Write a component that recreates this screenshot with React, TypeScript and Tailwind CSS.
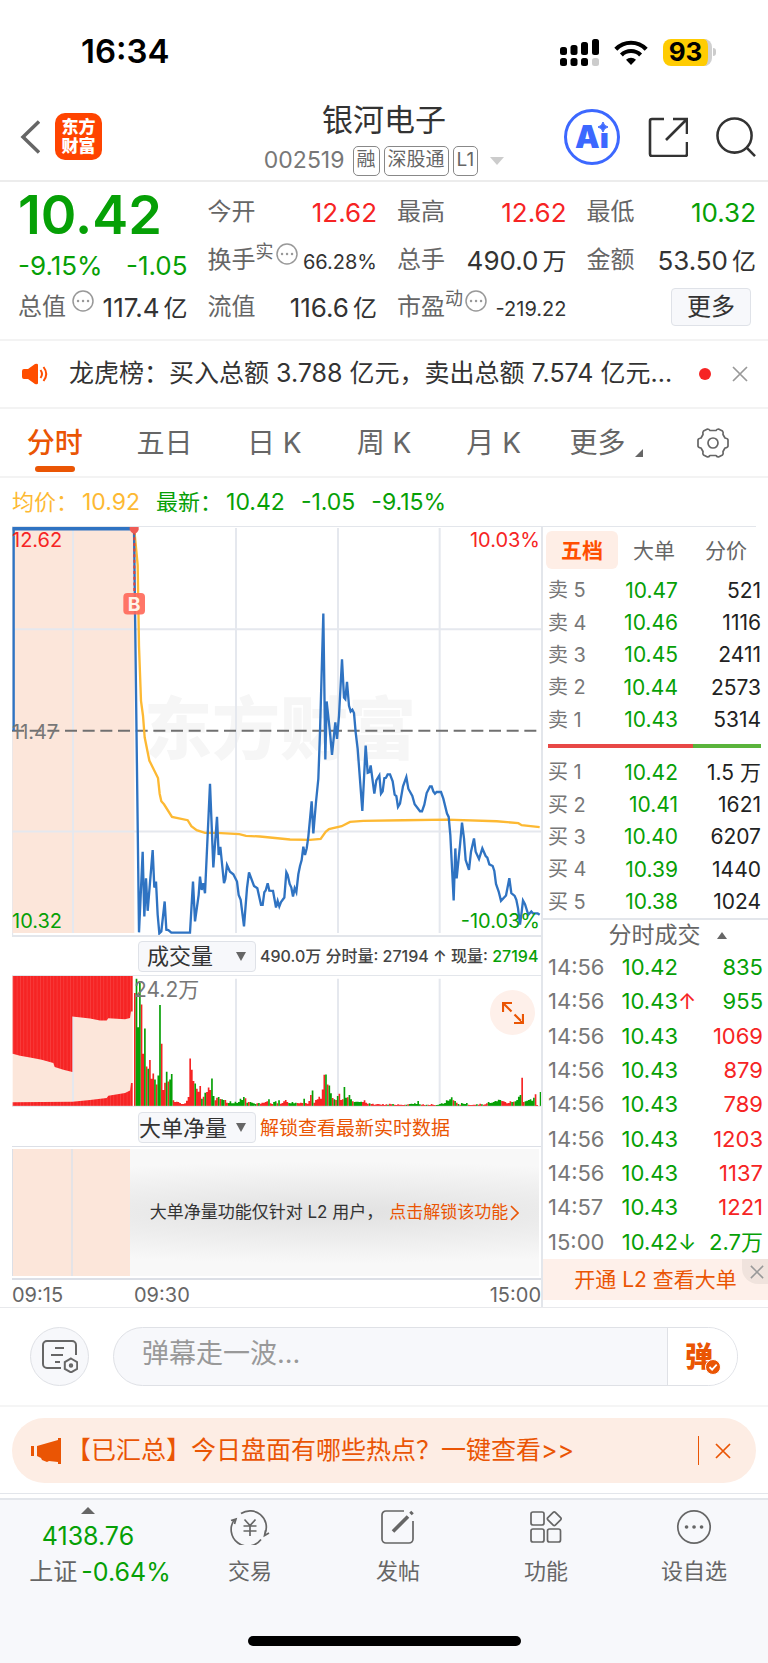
import { useState, type ReactNode } from 'react';
import clsx from 'clsx';

const UP = '#f62424';
const DOWN = '#06a006';

type Level = { label: string; price: string; volume: string };

const asks: Level[] = [
  { label: '卖 5', price: '10.47', volume: '521' },
  { label: '卖 4', price: '10.46', volume: '1116' },
  { label: '卖 3', price: '10.45', volume: '2411' },
  { label: '卖 2', price: '10.44', volume: '2573' },
  { label: '卖 1', price: '10.43', volume: '5314' },
];

const bids: Level[] = [
  { label: '买 1', price: '10.42', volume: '1.5 万' },
  { label: '买 2', price: '10.41', volume: '1621' },
  { label: '买 3', price: '10.40', volume: '6207' },
  { label: '买 4', price: '10.39', volume: '1440' },
  { label: '买 5', price: '10.38', volume: '1024' },
];

const trades = [
  { time: '14:56', price: '10.42', dir: '', volume: '835', buy: false },
  { time: '14:56', price: '10.43', dir: '↑', volume: '955', buy: false },
  { time: '14:56', price: '10.43', dir: '', volume: '1069', buy: true },
  { time: '14:56', price: '10.43', dir: '', volume: '879', buy: true },
  { time: '14:56', price: '10.43', dir: '', volume: '789', buy: true },
  { time: '14:56', price: '10.43', dir: '', volume: '1203', buy: true },
  { time: '14:56', price: '10.43', dir: '', volume: '1137', buy: true },
  { time: '14:57', price: '10.43', dir: '', volume: '1221', buy: true },
  { time: '15:00', price: '10.42', dir: '↓', volume: '2.7万', buy: false },
];

const periods = ['分时', '五日', '日 K', '周 K', '月 K', '更多'];

const pricePoints =
  '41,635 41,25 402,25 417,1243 428,1000 433,1195 438,1080 443,1178 458,995 463,1108 468,1090 473,1190 478,1246 484,1240 494,1150 499,1235 505,1236 514,1244 570,1244 579,1090 585,1210 596,1130 600,1075 605,1115 610,1095 615,1125 630,795 640,1047 651,895 656,1010 661,985 672,1095 676,1082 681,1040 690,1060 700,1068 711,1090 716,1130 722,1145 732,1225 741,1110 747,1062 762,1103 772,1110 783,1160 788,1160 793,1122 797,1117 803,1095 808,1117 819,1118 828,1168 833,1148 838,1165 843,1152 853,1138 859,1062 863,1070 869,1097 874,1108 879,1135 884,1110 889,1122 895,1068 900,1043 905,1025 910,985 915,1010 920,990 925,955 935,848 940,945 948,850 955,780 960,640 970,282 976,722 980,547 990,640 996,708 1006,610 1011,660 1017,590 1026,420 1032,535 1036,540 1041,488 1047,560 1052,577 1057,572 1062,582 1067,640 1073,690 1087,877 1097,680 1103,762 1108,760 1112,740 1123,825 1129,785 1138,770 1143,825 1148,818 1153,778 1158,777 1163,767 1170,767 1178,788 1184,828 1189,832 1194,865 1200,855 1209,803 1219,775 1225,810 1237,832 1244,857 1260,878 1266,878 1273,858 1280,823 1290,803 1295,803 1300,818 1305,825 1310,820 1323,820 1330,840 1341,885 1346,895 1351,950 1361,1147 1366,990 1370,1080 1380,980 1386,912 1392,960 1397,1025 1407,1055 1413,1000 1422,960 1427,1000 1437,1022 1447,990 1457,1013 1462,1018 1468,1038 1478,1043 1483,1058 1488,1097 1496,1120 1503,1148 1518,1132 1528,1080 1534,1125 1544,1133 1549,1145 1554,1170 1560,1220 1564,1190 1569,1147 1575,1158 1585,1190 1594,1180 1599,1186 1613,1186 1619,1190';

const averagePoints =
  '403,30 413,135 417,380 423,545 429,590 434,655 448,725 474,778 479,825 484,848 492,857 516,895 563,905 574,923 590,935 615,943 650,943 718,947 738,952 780,954 840,960 870,963 930,964 962,961 977,940 987,932 1025,923 1050,910 1090,907 1210,905 1340,903 1490,908 1555,914 1565,920 1619,926';

// one bar per minute, negative = sell side (green)
const minuteVolumes = [
  340, -383, -237, -370, 305, 157, -233, 119, -112, 138, 82, 98, -80, 65, -92, -304, 187, 48, 70, -103,
  74, -80, -96, 17, 12, 13, 12, 9, 6, 6, 8, 16, 27, 143, 109, 75, -68, 52, 43, 60,
  -22, 28, -40, 42, 56, 48, -83, -30, 17, 25, -27, 21, -20, -18, 18, 10, -9, -14, -8, -8,
  -13, -9, -12, -22, -18, -27, 23, -10, 12, -12, -10, -8, -6, 8, -9, 7, 10, 10, 12, 14,
  -20, 8, 6, -12, -14, 8, -17, 7, 9, 14, 18, 12, -9, -8, -12, -8, -10, 9, 8, 10,
  9, -22, 9, 7, 15, 33, -47, 10, 18, 20, 28, 22, 50, 94, -95, 65, -62, -38, 24, -20,
  18, -30, 37, 18, 20, -57, -25, 26, -33, -20, 14, -12, -13, -13, -12, -13, 12, 17, 10, 7,
  -8, 6, 7, 4, 5, 6, 5, 4, 6, 3, 5, -4, 7, 5, -6, 4, 3, 5, 4, 4,
  3, 4, -4, 5, -6, -7, -6, -8, -6, -15, -5, 4, 5, 3, -4, 4, 3, 6, 4, 3,
  -3, -4, -6, -8, -7, -9, -17, -16, -20, -26, 17, -15, 10, -6, 4, -9, -7, -6, -9, 4,
  3, 3, 4, 4, -5, 4, 7, -5, 4, 5, 8, -12, -9, -10, -12, -15, -14, -19, -18, 15,
  14, 12, 8, 9, 14, -12, 13, -14, -18, -28, -33, 85, 12, -14, -16, -18, -20, -16, -25, 35,
  3, 0, -42,
];

const BAR_STEP = 5.03;

function barsPath(sign: 1 | -1) {
  return minuteVolumes
    .map((v, i) => (v * sign > 0 ? `M${402 + i * BAR_STEP} 527v${-Math.abs(v)}h5v${Math.abs(v)}z` : ''))
    .join('');
}

function MoreDots() {
  return (
    <svg viewBox="0 0 22 22" className="size-[22px] shrink-0" fill="none" stroke="#999" strokeWidth="1.5">
      <circle cx="11" cy="11" r="10" />
      <path d="M6 11h.1M11 11h.1M16 11h.1" strokeWidth="2.4" strokeLinecap="round" />
    </svg>
  );
}

function CloseIcon({ className }: { className?: string }) {
  return (
    <svg viewBox="0 0 16 16" className={className} fill="none" stroke="currentColor" strokeWidth="1.7">
      <path d="M1 1l14 14M15 1L1 15" />
    </svg>
  );
}

function StatusBar() {
  return (
    <div className="flex h-24 items-center justify-between pt-2 pr-[52px] pl-[81px]">
      <span className="text-[33px] font-semibold text-black">16:34</span>
      <div className="flex items-center gap-[15px]">
        <svg viewBox="0 0 39 28" className="h-7 w-[39px]">
          <g fill="#000">
            <rect x="0" y="9" width="7" height="8" rx="2.5" />
            <rect x="10.5" y="7" width="7" height="10" rx="2.5" />
            <rect x="21" y="4" width="7" height="13" rx="2.5" />
            <rect x="32" y="1" width="7" height="16" rx="2.5" />
            <rect x="0" y="20" width="7" height="8" rx="2.5" />
            <rect x="10.5" y="20" width="7" height="8" rx="2.5" />
            <rect x="21" y="20" width="7" height="8" rx="2.5" />
          </g>
          <rect x="32" y="20" width="7" height="8" rx="2.5" fill="#ccc" />
        </svg>
        <svg viewBox="0 0 34 25" className="h-[25px] w-[34px]" fill="none" stroke="#000" strokeWidth="4.2">
          <path d="M1.8 9.2C10.2.6 23.8.6 32.2 9.2" />
          <path d="M7.4 14.9c5.3-5.2 13.9-5.2 19.2 0" />
          <path d="M17 25l-5-5.3c2.9-2.7 7.1-2.7 10 0z" fill="#000" stroke="none" />
        </svg>
        <div className="flex items-center gap-px">
          <div className="flex h-[27px] w-[49px] items-center justify-center rounded-lg border-r-4 border-[#d0d0d0] bg-[#ffcc02] text-[26px] leading-none font-bold text-black">
            93
          </div>
          <div className="h-2 w-[3px] rounded-r bg-[#ccc]" />
        </div>
      </div>
    </div>
  );
}

function Tag({ children }: { children: ReactNode }) {
  return (
    <span className="flex h-[30px] items-center rounded-[5px] border border-[#888] px-[3px] text-[19px] text-[#666]">
      {children}
    </span>
  );
}

function Header() {
  return (
    <header className="grid h-[86px] grid-cols-[1fr_auto_1fr] items-center border-b-2 border-[#ececec] px-3 pb-[3px]">
      <div className="flex items-center gap-[15px] pl-2">
        <button aria-label="返回">
          <svg viewBox="0 0 20 34" className="h-[34px] w-5" fill="none" stroke="#666" strokeWidth="3.5">
            <path d="M19 1.5L3 17l16 15.5" />
          </svg>
        </button>
        <div className="flex size-[47px] flex-col items-center justify-center rounded-[10px] bg-[#ff4400] text-[17px] leading-[19px] font-black text-white">
          <span>东方</span>
          <span>财富</span>
        </div>
      </div>
      <div className="flex flex-col items-center gap-2 pt-1">
        <h1 className="text-[31px] leading-9 text-[#333]">银河电子</h1>
        <div className="flex items-center gap-1">
          <span className="mr-1 text-[23px] leading-none text-[#777]">002519</span>
          <Tag>融</Tag>
          <Tag>深股通</Tag>
          <Tag>L1</Tag>
          <svg viewBox="0 0 14 8" className="ml-2 h-2 w-3.5" fill="#ccc">
            <path d="M0 0h14L7 8z" />
          </svg>
        </div>
      </div>
      <div className="flex items-center justify-end gap-7">
        <button
          aria-label="AI 助手"
          className="relative flex size-14 items-center justify-center rounded-full border-[3px] border-[#3c68ff] text-[31px] leading-none font-black text-[#3c68ff]"
        >
          Ai
          <svg viewBox="0 0 12 12" className="absolute top-[9px] right-2 size-3">
            <rect width="12" height="12" fill="#fff" />
            <path d="M6 1q.8 4.2 5 5-4.2.8-5 5-.8-4.2-5-5 4.2-.8 5-5z" fill="#3c68ff" stroke="#3c68ff" />
          </svg>
        </button>
        <button aria-label="分享">
          <svg viewBox="0 0 40 40" className="size-10" fill="none" stroke="#333" strokeWidth="2.6">
            <path d="M16 2H4a2 2 0 0 0-2 2v33a2 2 0 0 0 2 2h33a2 2 0 0 0 2-2V25" />
            <path d="M25 2h14v15M39 2L18 23" />
          </svg>
        </button>
        <button aria-label="搜索">
          <svg viewBox="0 0 41 41" className="size-10" fill="none" stroke="#333" strokeWidth="2.6">
            <circle cx="19" cy="19" r="17.5" />
            <path d="M31 31l9 9" />
          </svg>
        </button>
      </div>
    </header>
  );
}

function Stat({ label, note, children }: { label: string; note?: string; children: ReactNode }) {
  return (
    <div className="flex items-center justify-between text-[26px] whitespace-nowrap">
      <div className="flex items-center text-2xl text-[#666]">
        {label}
        {note !== undefined && (
          <>
            <span className="mb-4 min-w-1 text-lg leading-5">{note}</span>
            <span className="mb-3 ml-0.5">
              <MoreDots />
            </span>
          </>
        )}
      </div>
      {children}
    </div>
  );
}

function Amount({ value, unit }: { value: string; unit: string }) {
  return (
    <span>
      {value}
      <span className="ml-1 text-2xl">{unit}</span>
    </span>
  );
}

function Quote() {
  return (
    <section className="grid grid-cols-4 grid-rows-[48px_48px_46px] gap-x-5 border-b-2 border-[#f3f3f3] pt-1.5 pr-3 pb-[9px] pl-[18px] text-[#333]">
      <div className="flex items-center pt-1.5 text-[54px] leading-none font-semibold text-[#06a006]">10.42</div>
      <Stat label="今开"><span className="text-[#f62424]">12.62</span></Stat>
      <Stat label="最高"><span className="text-[#f62424]">12.62</span></Stat>
      <Stat label="最低"><span className="text-[#06a006]">10.32</span></Stat>
      <div className="flex items-center justify-between pt-2.5 text-[26px] text-[#06a006]">
        <span>-9.15%</span>
        <span>-1.05</span>
      </div>
      <Stat label="换手" note="实"><span className="pt-1 text-xl">66.28%</span></Stat>
      <Stat label="总手"><Amount value="490.0" unit="万" /></Stat>
      <Stat label="金额"><Amount value="53.50" unit="亿" /></Stat>
      <Stat label="总值" note=""><Amount value="117.4" unit="亿" /></Stat>
      <Stat label="流值"><Amount value="116.6" unit="亿" /></Stat>
      <Stat label="市盈" note="动"><span className="pt-1 text-xl">-219.22</span></Stat>
      <div className="flex items-center justify-end pr-[5px]">
        <button className="h-[38px] w-20 rounded border border-[#dfe2e8] bg-[#f7f8fb] text-2xl leading-none">
          更多
        </button>
      </div>
    </section>
  );
}

function NewsBar() {
  return (
    <section className="flex h-[68px] items-center border-b-2 border-[#f3f3f3] pr-5 pl-[22px]">
      <svg viewBox="0 0 26 22" className="h-[22px] w-[26px] shrink-0">
        <path d="M0 8q0-2 2-2h4l7-5q3-1 3 1v18q0 2-3 1l-7-5H2q-2 0-2-2z" fill="#ff4e00" />
        <path d="M18.5 7q3 4 0 8M21.5 4q5.5 7 0 14" fill="none" stroke="#ff4e00" strokeWidth="2" />
      </svg>
      <a href="#news" className="ml-[21px] flex-1 truncate text-[25px] text-[#333]">
        龙虎榜：买入总额 3.788 亿元，卖出总额 7.574 亿元...
      </a>
      <span className="ml-3 size-3 rounded-full bg-[#f62424]" />
      <button aria-label="关闭" className="ml-[21px] text-[#999]">
        <CloseIcon className="size-4" />
      </button>
    </section>
  );
}

function PeriodTabs() {
  const [active, setActive] = useState('分时');
  return (
    <nav className="grid h-[69px] grid-cols-7 border-b-2 border-[#f3f3f3] text-[28px]">
      {periods.map((p) => (
        <button
          key={p}
          onClick={() => setActive(p)}
          className={clsx(
            'relative flex items-center justify-center',
            active === p ? 'font-medium text-[#ea5504]' : 'text-[#666]',
            p === '更多' && 'pl-1.5',
          )}
        >
          {p}
          {p === '更多' && (
            <svg viewBox="0 0 8 8" className="mt-5 ml-2.5 size-2" fill="#666">
              <path d="M8 0v8H0z" />
            </svg>
          )}
          {active === p && <span className="absolute bottom-1 h-1.5 w-10 rounded-full bg-[#ea5504]" />}
        </button>
      ))}
      <button aria-label="设置" className="flex items-center justify-center">
        <svg viewBox="0 0 32 30" className="h-[30px] w-8" fill="none" stroke="#666" strokeWidth="1.7" strokeLinejoin="round">
          <path d="M10.5 1q1.5 0 2.5 1.5h6Q20 1 21.5 1l4 2q1 1 .5 3.5l2 3.5q3 .5 3 2v6q0 1.5-3 2l-2 3.500q.5 2.500-.5 3.500l-4 2q-1.500 0-2.500-1.500h-6Q12 29 10.500 29l-4-2q-1-1-.5-3.500L4 20q-3-.5-3-2v-6q0-1.500 3-2l2-3.500Q5.500 4 6.500 3z" />
          <circle cx="16" cy="15" r="5" />
        </svg>
      </button>
    </nav>
  );
}

function PriceLegend() {
  return (
    <div className="flex h-12 items-center gap-4 pl-3 text-[23px] text-[#06a006]">
      <span className="flex items-center gap-1 text-[#fdb933]">
        <span className="text-[22px]">均价：</span>10.92
      </span>
      <span className="flex items-center gap-1">
        <span className="text-[22px]">最新：</span>10.42
      </span>
      <span>-1.05</span>
      <span>-9.15%</span>
    </div>
  );
}

function PriceChart() {
  return (
    <div className="relative h-[411px] border-t border-b-2 border-[#e3e6eb] text-xl leading-none">
      <span className="absolute top-[168px] left-[132px] text-[68px] font-black text-[#f6f6f6]">东方财富</span>
      <svg viewBox="36 21 1587 1230" preserveAspectRatio="none" className="absolute inset-0 size-full" fill="none">
        <path d="M38 21V1251" stroke="#dfe3ea" strokeWidth="3" />
        <path d="M43 30H403V1245H38V635H43z" fill="#fce6da" />
        <path d="M219 30V1245M708 24V1245M1014 24V1245M1319 24V1245M38 329H1623M38 939H1623" stroke="#e5e8ee" strokeWidth="6" />
        <path d="M36 635H1619" stroke="#707070" strokeWidth="6" strokeDasharray="36 17" />
        <polyline points={averagePoints} stroke="#fdb933" strokeWidth="7" />
        <polyline points={pricePoints} stroke="#2f73c2" strokeWidth="7" />
        <path d="M38 26H390" stroke="#2f73c2" strokeWidth="11" />
        <path d="M403 35V220" stroke="#e0433c" strokeWidth="6" strokeDasharray="9 8" />
        <path d="M389 21h27v8q-4 11-13 11t-14-11z" fill="#ee5b55" />
        <rect x="370" y="220" width="65" height="65" rx="12" fill="#ff6a5b" fillOpacity=".92" />
        <text x="402.5" y="273" textAnchor="middle" fontSize="58" fontWeight="700" fill="#fff4e8">B</text>
      </svg>
      <span className="absolute top-[3px] left-0 text-[#f62424]">12.62</span>
      <span className="absolute top-[3px] right-px text-[#f62424]">10.03%</span>
      <span className="absolute top-[195px] left-0 text-[#777]">11.47</span>
      <span className="absolute bottom-1 left-0 text-[#06a006]">10.32</span>
      <span className="absolute right-px bottom-1 text-[#06a006]">-10.03%</span>
    </div>
  );
}

function VolumeChart() {
  return (
    <div className="relative h-[132px] border-t border-[#e3e6eb]">
      <svg viewBox="36 136 1587 394" preserveAspectRatio="none" className="absolute inset-0 size-full">
        <defs>
          <pattern id="bars" width="10" height="10" patternUnits="userSpaceOnUse">
            <rect width="10" height="10" fill={UP} />
            <rect width="2" height="10" fill="#fff" fillOpacity=".14" />
          </pattern>
        </defs>
        <rect x="38" y="136" width="360" height="391" fill="#fce6da" />
        <path d="M219 144V527M708 144V527M1014 144V527M1319 144V527" stroke="#e5e8ee" strokeWidth="6" />
        <path d="M38 136V370L60 376 90 381 125 388 160 398 164 410 190 418 217 425V258L270 264 300 270H320L325 263 375 266 390 262 393 243H398V136z" fill="url(#bars)" />
        <path d="M38 527V516L217 514 270 509 320 503 325 496 375 488 390 480 393 458H398V527z" fill="url(#bars)" />
        <path d={barsPath(1)} fill={UP} />
        <path d={barsPath(-1)} fill={DOWN} />
        <path d="M36 528H1623" stroke="#e3e6eb" strokeWidth="3" />
      </svg>
      <span className="absolute top-1 left-[122px] text-[21px] leading-5 text-[#777]">24.2万</span>
      <button
        aria-label="展开图表"
        className="absolute top-[14px] right-1.5 flex size-[45px] items-center justify-center rounded-full bg-[#fef0ea]"
      >
        <svg viewBox="0 0 22 22" className="size-[22px]" fill="none" stroke="#ea5504" strokeWidth="2.2">
          <path d="M1 10V1h9M1 1l8.5 8.5M21 12v9h-9M21 21l-8.5-8.5" />
        </svg>
      </button>
    </div>
  );
}

function IndicatorSelect({ label, options, className }: { label: string; options: string[]; className: string }) {
  return (
    <div className="relative w-[118px]">
      <select
        aria-label={label}
        className={clsx(
          'block h-[31px] w-full appearance-none rounded border border-[#dfe2e8] bg-[#f7f8fb] text-[22px] leading-none text-[#333]',
          className,
        )}
      >
        {options.map((o) => (
          <option key={o}>{o}</option>
        ))}
      </select>
      <svg viewBox="0 0 10 9" className="pointer-events-none absolute top-[11px] right-[10px] h-[9px] w-2.5" fill="#666">
        <path d="M0 0h10L5 9z" />
      </svg>
    </div>
  );
}

function Charts() {
  return (
    <div className="min-w-0 flex-1">
      <PriceChart />
      <div className="flex h-[38px] items-center gap-1 pl-[126px] whitespace-nowrap">
        <IndicatorSelect label="副图指标一" options={['成交量', '大单净量']} className="pl-2" />
        <span className="text-base font-medium text-[#444]">
          490.0万 分时量: 27194 ↑ 现量: <span className="text-[#06a006]">27194</span>
        </span>
      </div>
      <VolumeChart />
      <div className="flex h-[39px] items-center gap-1 pt-0.5 pl-[126px] whitespace-nowrap">
        <IndicatorSelect label="副图指标二" options={['大单净量', '成交量']} className="pl-0" />
        <a href="#l2" className="pt-1 text-[19px] text-[#ea5504]">解锁查看最新实时数据</a>
      </div>
      <div className="flex h-[134px] border-t border-b-2 border-[#dcdfe6] py-0.5 pr-0.5">
        <div className="flex w-[118px] border-l border-[#dcdfe6] bg-[#fce6da]">
          <div className="w-[60px] border-r-2 border-[#e5e3e6]" />
        </div>
        <div className="flex flex-1 items-center justify-center bg-[radial-gradient(ellipse_120%_40%_at_50%_50%,#e1e1e1,#f8f8f8)] text-[17px] whitespace-nowrap text-[#333]">
          大单净量功能仅针对 L2 用户，
          <a href="#l2" className="ml-1.5 flex items-center text-[#ea5504]">
            点击解锁该功能
            <svg viewBox="0 0 9 16" className="ml-0.5 h-4 w-[9px]" fill="none" stroke="currentColor" strokeWidth="1.6">
              <path d="M1 1l7 7-7 7" />
            </svg>
          </a>
        </div>
      </div>
      <div className="flex h-[27px] items-center pt-0.5 text-xl leading-none text-[#666]">
        <span className="w-[122px]">09:15</span>
        <span>09:30</span>
        <span className="ml-auto">15:00</span>
      </div>
    </div>
  );
}

function LevelTable({ levels, caption }: { levels: Level[]; caption: string }) {
  return (
    <table aria-label={caption} className="h-[162px] w-full table-fixed text-[21px] leading-none">
      <tbody>
        {levels.map((l) => (
          <tr key={l.label}>
            <td className="w-[60px] text-xl leading-none text-[#777]">{l.label}</td>
            <td className="w-[70px] text-right text-[#06a006]">{l.price}</td>
            <td className="text-right text-[#222]">{l.volume}</td>
          </tr>
        ))}
      </tbody>
    </table>
  );
}

function OrderBook() {
  const [tab, setTab] = useState('五档');
  return (
    <aside className="flex w-[227px] shrink-0 flex-col border-l-2 border-[#e3e6eb]">
      <div className="mr-3 flex border-t border-[#e3e6eb] pt-1 pl-[3px]">
        {['五档', '大单', '分价'].map((t) => (
          <button
            key={t}
            onClick={() => setTab(t)}
            className={clsx(
              'h-[38px] w-[72px] shrink-0 rounded-md text-[21px] leading-none',
              tab === t ? 'bg-[#feeee6] font-bold text-[#ff4e00]' : 'text-[#666]',
            )}
          >
            {t}
          </button>
        ))}
      </div>
      <div className="pt-[5px] pr-[7px] pl-[5px]">
        <LevelTable levels={asks} caption="卖盘" />
        <div className="my-2 flex h-1 bg-[#5ab43c]">
          <div className="w-[68%] bg-[#e84846]" />
        </div>
        <LevelTable levels={bids} caption="买盘" />
      </div>
      <button className="flex h-8 items-center justify-center gap-4 border-t-2 border-[#e3e6eb] pl-6 text-[23px] leading-none text-[#666]">
        分时成交
        <svg viewBox="0 0 10 7" className="h-[7px] w-2.5" fill="#666">
          <path d="M0 7h10L5 0z" />
        </svg>
      </button>
      <div className="px-[5px]">
        <table aria-label="分时成交" className="h-[309px] w-full table-fixed text-[22px] leading-none">
          <tbody>
            {trades.map((t, i) => (
              <tr key={i}>
                <td className="w-[60px] text-[#777]">{t.time}</td>
                <td className="w-[70px] text-right text-[#06a006]">{t.price}</td>
                <td className={clsx('w-4', t.dir === '↑' ? 'text-[#f62424]' : 'text-[#06a006]')}>{t.dir}</td>
                <td className={clsx('text-right whitespace-nowrap', t.buy ? 'text-[#f62424]' : 'text-[#06a006]')}>
                  {t.volume}
                </td>
              </tr>
            ))}
          </tbody>
        </table>
      </div>
      <div className="relative flex h-[41px] items-center justify-center bg-[#fef0ea] text-[21px] text-[#ea5504]">
        <a href="#l2">开通 L2 查看大单</a>
        <button
          aria-label="关闭"
          className="absolute top-0 right-0 flex h-[25px] w-[26px] items-center justify-center rounded-bl-2xl bg-[#f0e3dd] pl-1 text-[#999]"
        >
          <CloseIcon className="size-3.5" />
        </button>
      </div>
    </aside>
  );
}

function CommentBar() {
  return (
    <form className="flex items-center border-t border-b-2 border-[#e8e9ec] border-b-[#f5f5f5] px-[30px] py-[19px]">
      <button
        type="button"
        aria-label="弹幕设置"
        className="flex size-[59px] items-center justify-center rounded-full border border-[#dfe1e6] bg-[#f7f8fb]"
      >
        <svg viewBox="0 0 36 33" className="h-[33px] w-9" fill="none" stroke="#666" strokeWidth="2">
          <path d="M19 28H5a4 4 0 0 1-4-4V5a4 4 0 0 1 4-4h25a4 4 0 0 1 4 4v10" />
          <path d="M13 8h9M9 15h12M13 22h5" />
          <path d="M29 18.5l6.2 3.6v6.8L29 32.4l-6.2-3.5v-6.8z" />
          <circle cx="29" cy="25.5" r="1.2" />
        </svg>
      </button>
      <div className="ml-6 flex h-[59px] flex-1 overflow-hidden rounded-full border border-[#dfe1e6] bg-[#f7f8fb]">
        <input
          aria-label="发送弹幕"
          placeholder="弹幕走一波..."
          className="min-w-0 flex-1 pb-1 pl-7 text-[27px] outline-none placeholder:text-[#999]"
        />
        <button
          type="button"
          aria-label="弹幕开关"
          className="flex w-[70px] items-center border-l border-[#dfe1e6] bg-white pl-[17px]"
        >
          <span className="relative text-[28px] leading-none font-black text-[#ea5504]">
            弹
            <svg viewBox="0 0 16 16" className="absolute -right-2 -bottom-1 size-4">
              <circle cx="8" cy="8" r="7.5" fill="#ea5504" stroke="#fff" />
              <path d="M4.5 8l2.6 2.6 4.6-5" fill="none" stroke="#fff" strokeWidth="1.8" />
            </svg>
          </span>
        </button>
      </div>
    </form>
  );
}

function HotBanner() {
  return (
    <div className="px-3 pt-[11px] pb-2.5">
      <div className="flex h-[65px] items-center rounded-full bg-[#fdede4] pr-[25px] pl-[19px] text-[25px] text-[#ea5504]">
        <svg viewBox="0 0 31 26" className="h-[26px] w-[31px] shrink-0" fill="currentColor">
          <path d="M0 8h3v10H0zM6 8l21-6V0h3v26h-3v-2l-9-1-2 1-5-2-1-2-4-2z" />
        </svg>
        <a href="#hot" className="ml-1 flex-1 truncate">【已汇总】今日盘面有哪些热点？一键查看&gt;&gt;</a>
        <span className="h-[29px] w-px bg-[#ea5504]" />
        <button aria-label="关闭" className="ml-4">
          <CloseIcon className="size-4" />
        </button>
      </div>
    </div>
  );
}

function NavItem({ label, children }: { label: string; children: ReactNode }) {
  return (
    <button className="flex flex-1 flex-col items-center pt-[9px] text-[#666]">
      <svg viewBox="0 0 40 36" className="h-9 w-10" fill="none" stroke="currentColor" strokeWidth="1.7">
        {children}
      </svg>
      <span className="mt-2.5 text-[22px]">{label}</span>
    </button>
  );
}

function BottomNav() {
  return (
    <footer className="border-t border-[#e3e6eb] pt-1">
      <div className="border-t-2 border-[#e3e6eb] bg-[#f7f8fb] pb-[17px]">
        <div className="flex h-[136px]">
          <button className="flex w-[176px] flex-col items-center pt-[7px] text-[25px] leading-9 whitespace-nowrap text-[#06a006]">
            <svg viewBox="0 0 14 7" className="mb-1 h-[7px] w-3.5" fill="#666">
              <path d="M0 7h14L7 0z" />
            </svg>
            <span>4138.76</span>
            <span className="flex gap-1 pl-6">
              <span className="text-2xl leading-9 text-[#666]">上证</span>-0.64%
            </span>
          </button>
          <NavItem label="交易">
            <path d="M11 4.5A16.3 16.3 0 0 1 35 24.5M31 30.5A16.3 16.3 0 0 1 4.5 10.5M1 11.5l5-1.5-1.5 5M39 24l-4.5 2.5 1-5" />
            <path d="M14.5 10.5l5.5 6 5.5-6M20 16.5V27M13.5 17h13M13.5 22h13" />
          </NavItem>
          <NavItem label="发帖">
            <path d="M26 2H8a4 4 0 0 0-4 4v24a4 4 0 0 0 4 4h23a4 4 0 0 0 4-4V12" />
            <path d="M15 22.5L30 7.5M32.5 5l2-2" strokeWidth="3.6" />
          </NavItem>
          <NavItem label="功能">
            <rect x="5" y="3" width="13" height="13" rx="2" />
            <rect x="5" y="20" width="13" height="13" rx="2" />
            <rect x="21.5" y="20" width="13" height="13" rx="2" />
            <rect x="23" y="4.5" width="10.5" height="10.5" rx="1.5" transform="rotate(45 28.25 9.75)" />
          </NavItem>
          <NavItem label="设自选">
            <circle cx="20" cy="18" r="16.2" />
            <path d="M12.5 18h.1M20 18h.1M27.5 18h.1" strokeWidth="3.6" strokeLinecap="round" />
          </NavItem>
        </div>
        <div className="mx-auto h-2.5 w-[273px] rounded-full bg-black" />
      </div>
    </footer>
  );
}

export default function App() {
  return (
    <div className="bg-white font-['Inter','Noto_Sans_CJK_SC',sans-serif]">
      <StatusBar />
      <Header />
      <Quote />
      <NewsBar />
      <PeriodTabs />
      <PriceLegend />
      <main className="flex pl-3">
        <Charts />
        <OrderBook />
      </main>
      <CommentBar />
      <HotBanner />
      <BottomNav />
    </div>
  );
}
